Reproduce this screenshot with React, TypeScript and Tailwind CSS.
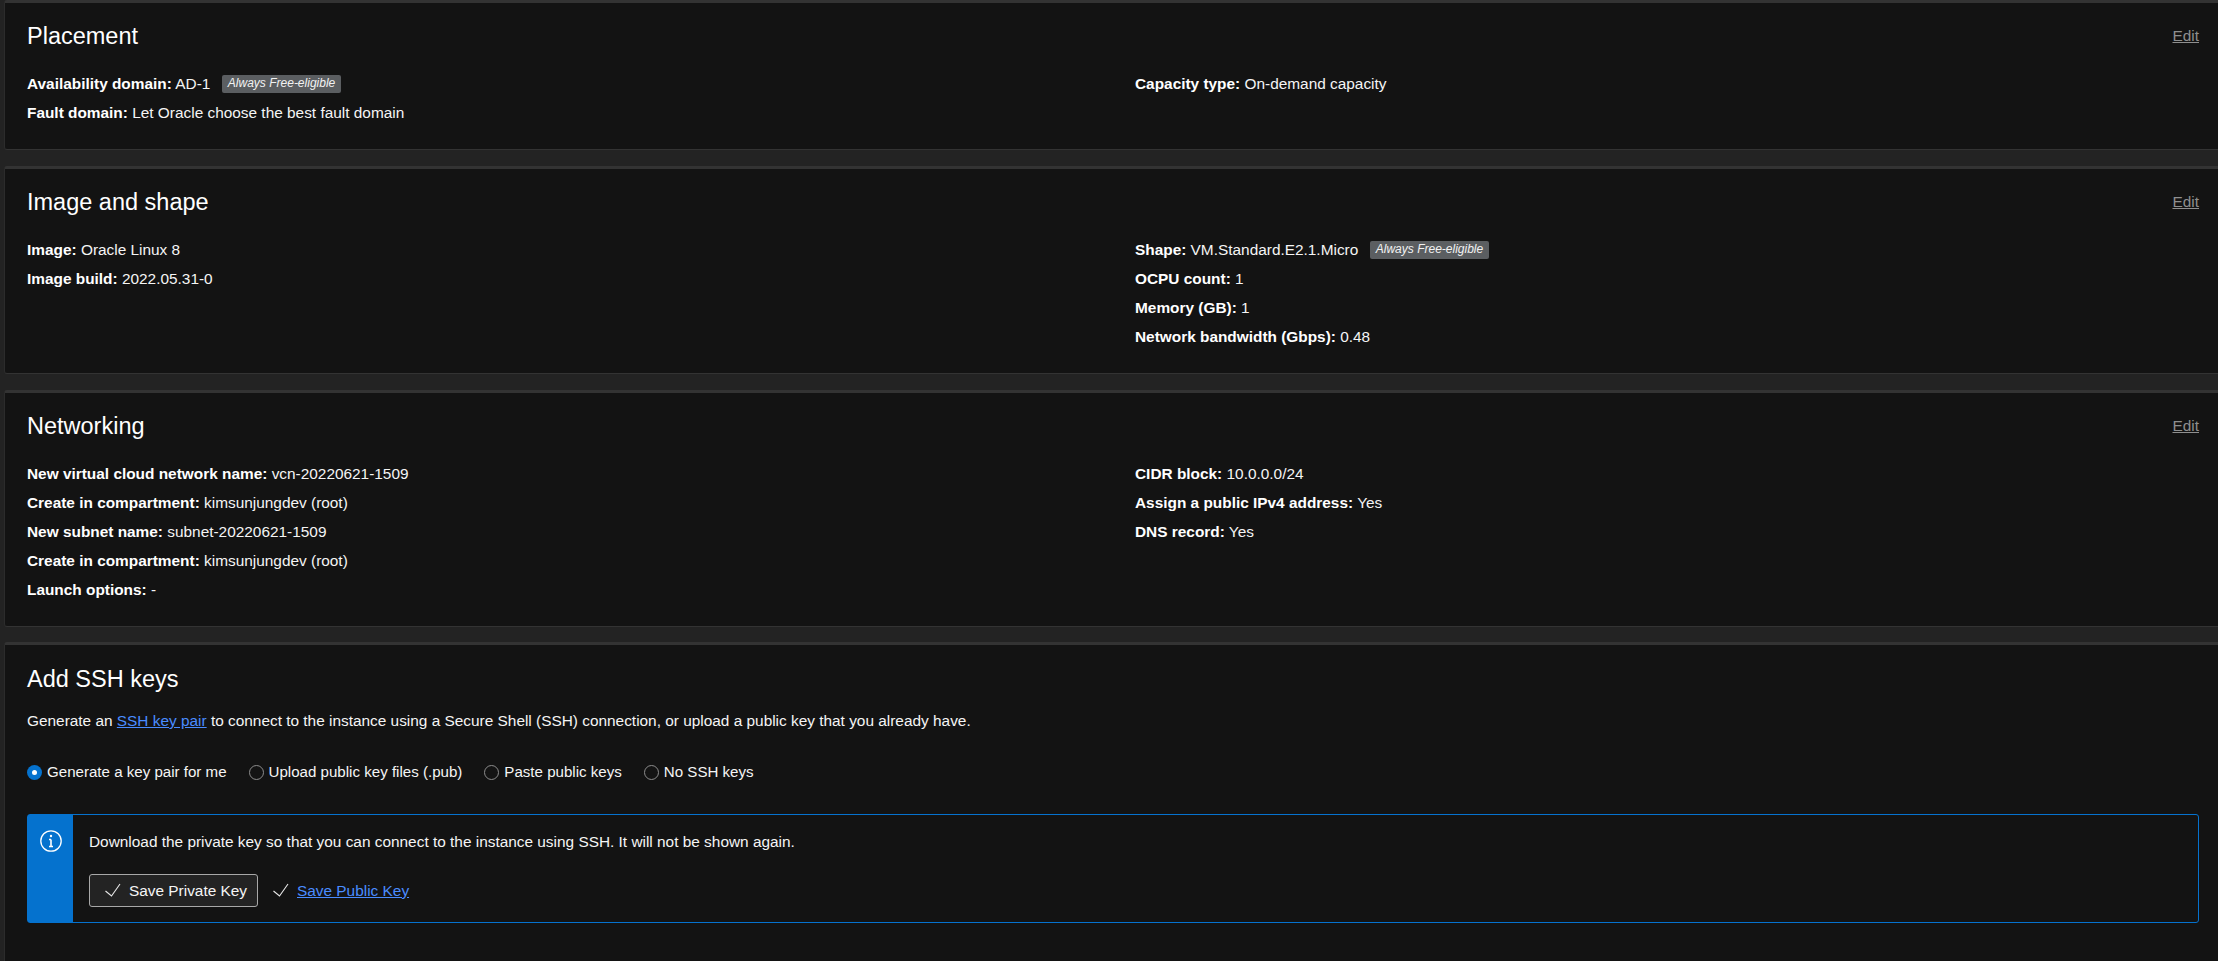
const font = "font-['Liberation_Sans',Arial,sans-serif]";

function Badge() {
  return (
    <span className="ml-[11.5px] inline-flex h-[18px] items-center rounded-[2px] bg-[#5b5e61] px-[6px] pb-[2px] text-[12px] italic leading-none text-[#f2f2f2]">
      Always Free-eligible
    </span>
  );
}

function Row({ label, value, badge }: { label: string; value: string; badge?: boolean }) {
  return (
    <div className="flex h-[29px] items-center text-[15.4px] text-[#f5f5f5]">
      <span className="whitespace-pre">
        <b className="font-bold text-white">{label}:</b> {value}
      </span>
      {badge && <Badge />}
    </div>
  );
}

type RowData = { label: string; value: string; badge?: boolean };

function Card({ title, left, right }: { title: string; left: RowData[]; right: RowData[] }) {
  return (
    <section className="mb-[16px] rounded-tl-[3px] rounded-bl-[3px] border-t-[3px] border-b border-l border-t-[#333333] border-b-[#333333] border-l-[#2c2c2c] bg-[#131313] pt-[19px] pr-[19px] pb-[22px] pl-[22px]">
      <div className="mb-[18px] flex h-[29px] items-center justify-between">
        <h2 className="text-[23.5px] font-normal text-white">{title}</h2>
        <a className="pb-[2px] text-[15.4px] text-[#8f8f8f] underline">Edit</a>
      </div>
      <div className="grid grid-cols-[1108px_1fr]">
        <div>
          {left.map((r) => (
            <Row key={r.label + r.value} {...r} />
          ))}
        </div>
        <div>
          {right.map((r) => (
            <Row key={r.label} {...r} />
          ))}
        </div>
      </div>
    </section>
  );
}

function Radio({ label, checked }: { label: string; checked?: boolean }) {
  return (
    <label className="flex items-center gap-[5px] text-[15.1px] text-[#f5f5f5]">
      {checked ? (
        <span className="flex h-[15px] w-[15px] items-center justify-center rounded-full bg-[#0572ce]">
          <span className="h-[5px] w-[5px] rounded-full bg-white" />
        </span>
      ) : (
        <span className="h-[15px] w-[15px] rounded-full border border-[#8c8c8c]" />
      )}
      {label}
    </label>
  );
}

function Check() {
  return (
    <svg width="16" height="14" viewBox="0 0 16 14" fill="none" stroke="#e8e8e8" strokeWidth="1.1">
      <path d="M0.5 8 L6.5 13 L15 1" />
    </svg>
  );
}

export default function App() {
  return (
    <main className={`${font} h-screen overflow-hidden bg-[#232323] pl-[4px]`}>
      <Card
        title="Placement"
        left={[
          { label: "Availability domain", value: "AD-1", badge: true },
          { label: "Fault domain", value: "Let Oracle choose the best fault domain" },
        ]}
        right={[{ label: "Capacity type", value: "On-demand capacity" }]}
      />
      <Card
        title="Image and shape"
        left={[
          { label: "Image", value: "Oracle Linux 8" },
          { label: "Image build", value: "2022.05.31-0" },
        ]}
        right={[
          { label: "Shape", value: "VM.Standard.E2.1.Micro", badge: true },
          { label: "OCPU count", value: "1" },
          { label: "Memory (GB)", value: "1" },
          { label: "Network bandwidth (Gbps)", value: "0.48" },
        ]}
      />
      <Card
        title="Networking"
        left={[
          { label: "New virtual cloud network name", value: "vcn-20220621-1509" },
          { label: "Create in compartment", value: "kimsunjungdev (root)" },
          { label: "New subnet name", value: "subnet-20220621-1509" },
          { label: "Create in compartment", value: "kimsunjungdev (root)" },
          { label: "Launch options", value: "-" },
        ]}
        right={[
          { label: "CIDR block", value: "10.0.0.0/24" },
          { label: "Assign a public IPv4 address", value: "Yes" },
          { label: "DNS record", value: "Yes" },
        ]}
      />

      {/* Add SSH keys */}
      <section className="-mt-px min-h-[319px] rounded-tl-[3px] border-t-[3px] border-l border-t-[#333333] border-l-[#2c2c2c] bg-[#131313] pt-[20px] pr-[19px] pl-[22px]">
        <h2 className="flex h-[29px] items-center text-[23.5px] font-normal text-white">Add SSH keys</h2>
        <p className="mt-[17px] text-[15.4px] leading-[20px] text-[#f5f5f5]">
          Generate an <a className="text-[#4a8cff] underline">SSH key pair</a> to connect to the instance using a
          Secure Shell (SSH) connection, or upload a public key that you already have.
        </p>
        <div className="mt-[30px] flex gap-[22px]">
          <Radio label="Generate a key pair for me" checked />
          <Radio label="Upload public key files (.pub)" />
          <Radio label="Paste public keys" />
          <Radio label="No SSH keys" />
        </div>
        <div className="mt-[30px] flex h-[109px] rounded-[3px] border border-[#0572ce]">
          <div className="flex w-[45px] shrink-0 justify-center bg-[#0572ce] pt-[15px]">
            <svg width="22" height="22" viewBox="0 0 22 22" fill="none" stroke="white">
              <circle cx="11" cy="11" r="10.2" strokeWidth="1.3" />
              <path d="M11 9.5 V16.5 M9 9.5 H11 M9 16.5 H13" strokeWidth="1.6" />
              <circle cx="11" cy="6" r="1.2" fill="white" stroke="none" />
            </svg>
          </div>
          <div className="pt-[17px] pl-[16px]">
            <p className="text-[15.4px] leading-[20px] text-[#f5f5f5]">
              Download the private key so that you can connect to the instance using SSH. It will not be shown again.
            </p>
            <div className="mt-[22px] flex items-center">
              <button className="flex h-[33px] w-[169px] items-center gap-[8px] rounded-[3px] border border-[#a8a8a8] bg-[#232323] pl-[15px] text-[15.4px] text-[#f5f5f5]">
                <Check />
                Save Private Key
              </button>
              <span className="mr-[8px] ml-[15px] flex">
                <Check />
              </span>
              <a className="text-[15.4px] text-[#4a8cff] underline">Save Public Key</a>
            </div>
          </div>
        </div>
      </section>
    </main>
  );
}
